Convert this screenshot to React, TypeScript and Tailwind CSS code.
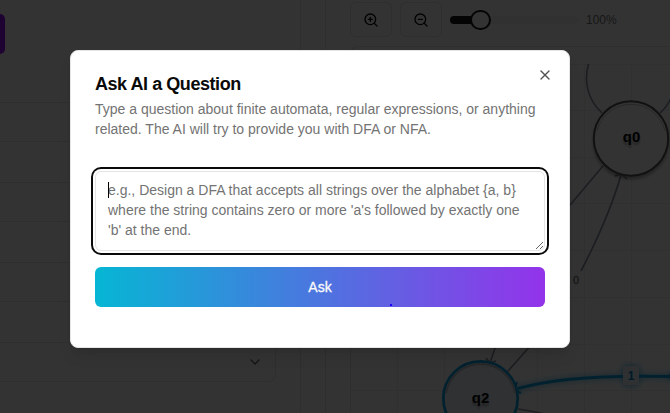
import { ChevronDown, X, ZoomIn, ZoomOut } from "lucide-react";

const verticals = [397.5, 444.5, 490.5, 537.5, 584.5, 631.5];
const horizontals = [64.5, 110.5, 157.5, 203.5, 250.5, 297.5, 344.5, 390.5];

function Sidebar() {
  return (
    <aside className="h-full w-[301px] shrink-0 border-r border-[#e5e5e5]">
      <div className="mt-[14px] h-10 w-[5px] rounded-r-md bg-purple-600" />
      <div className="mt-[48px] w-[276px]">
        {["h-[39px]", "h-[41px]", "h-[39px]", "h-[41px]", "h-[39px]", "h-[41px]"].map((h, i) => (
          <div key={i} className={`${h} border-t border-[#e5e5e5]`} />
        ))}
        <div className="flex h-[40px] items-center justify-end rounded-br-lg border-t border-r border-b border-[#e5e5e5] pr-3">
          <ChevronDown className="h-4 w-4 text-[#666666]" />
        </div>
      </div>
    </aside>
  );
}

function Toolbar() {
  return (
    <div className="flex h-[35px] items-center">
      <button className="flex h-[35px] w-[42px] items-center justify-center rounded-md border border-[#e5e5e5]">
        <ZoomIn className="h-4 w-4" />
      </button>
      <button className="ml-2 flex h-[35px] w-[42px] items-center justify-center rounded-md border border-[#e5e5e5]">
        <ZoomOut className="h-4 w-4" />
      </button>
      <div className="ml-2 flex h-5 w-32 items-center">
        <div className="h-2 w-[21px] rounded-l-full bg-[#171717]" />
        <div className="-ml-px h-5 w-[21px] rounded-full border-2 border-[#171717] bg-white" />
        <div className="h-2 flex-1 rounded-r-full bg-[#f5f5f5]" />
      </div>
      <span className="ml-2 text-xs text-[#737373]">100%</span>
    </div>
  );
}

function Diagram() {
  return (
    <svg className="h-[349px] w-[319px]" viewBox="351 64 319 349">
      <defs>
        <filter id="glow" x="-20%" y="-200%" width="140%" height="500%">
          <feDropShadow dx="0" dy="0" stdDeviation="3" floodColor="#0ea5e9" floodOpacity="0.8" />
        </filter>
        <filter id="shade" x="-30%" y="-30%" width="160%" height="160%">
          <feDropShadow dx="0" dy="3" stdDeviation="1.5" floodColor="#000" floodOpacity="0.3" />
        </filter>
      </defs>
      <g stroke="#eeeeee" strokeWidth="1">
        {verticals.map((x) => <path key={x} d={`M${x} 64V413`} />)}
        {horizontals.map((y) => <path key={y} d={`M351 ${y}H670`} />)}
      </g>
      <g fill="none" stroke="#8d93a5" strokeWidth="1.7">
        <path d="M589 62C583 82 588 100 602 113" />
        <path d="M660 113Q667 107 671 98" />
        <path d="M603 166L565 211" />
        <path d="M621 175Q609 217 581 271" />
        <path d="M497 342L490 363M486 358L490 363L496 361" />
        <path d="M532 344L508 371" />
        <path d="M518 409Q532 411 545 414" />
      </g>
      <g filter="url(#glow)" fill="none" stroke="#0ea5e9" strokeWidth="3">
        <path d="M518 388.5Q568 374 670 376.5" />
        <path d="M517 382L514 390L521 393" strokeWidth="2" />
        <path d="M674 370L667 376.5L674 383Z" fill="#0ea5e9" stroke="none" />
        <rect x="623" y="366" width="16" height="19" fill="#e3edf5" stroke="none" />
      </g>
      <circle cx="631" cy="138.5" r="37.2" fill="#fff" stroke="#555" strokeWidth="2" filter="url(#shade)" />
      <circle cx="480.5" cy="398.5" r="37.2" fill="#f0f4fa" stroke="#0ea5e9" strokeWidth="2.8" />
      <path d="M446 393A35 35 0 0 1 515 393" fill="none" stroke="#bcc0c8" strokeWidth="2" />
      <path d="M597 131A35 35 0 0 1 665 131" fill="none" stroke="#c4c4c4" strokeWidth="1" />
      <path d="M615 176L621 174L627 179" fill="none" stroke="#666" strokeWidth="1.5" />
      <g fontFamily="Liberation Sans, Arial, sans-serif" fontWeight="700" textAnchor="middle">
        <g fontSize="15" fill="#0a0a0a" className="[text-shadow:0_3px_2px_rgba(0,0,0,0.3)]">
          <text x="631.5" y="142">q0</text>
          <text x="480.5" y="403">q2</text>
        </g>
        <text x="576" y="284" fontSize="11" fill="#777" fontWeight="400" stroke="#777" strokeWidth="0.3">0</text>
        <text x="631" y="379.5" fontSize="12" fill="#0284c7">1</text>
      </g>
    </svg>
  );
}

function AskDialog() {
  return (
    <section role="dialog" className="relative h-[298px] w-[500px] rounded-lg border border-[#e5e5e5] bg-white p-6 shadow-lg">
      <h2 className="text-lg leading-none font-semibold tracking-tight text-[#0a0a0a]">Ask AI a Question</h2>
      <p className="mt-1.5 text-sm text-[#737373]">
        Type a question about finite automata, regular expressions, or anything
        <br />
        related. The AI will try to provide you with DFA or NFA.
      </p>
      <div className="mt-4 flex flex-col gap-4 py-4">
        <div className="relative h-20">
          <textarea
            className="block h-20 w-full rounded-md border border-[#e5e5e5] bg-white px-3 py-2 text-sm ring-2 ring-[#0a0a0a] ring-offset-2 outline-none placeholder:text-[#737373]"
            placeholder="e.g., Design a DFA that accepts all strings over the alphabet {a, b} where the string contains zero or more 'a's followed by exactly one 'b' at the end."
          />
          <span className="absolute top-[11px] left-[13px] h-4 w-px bg-black" />
        </div>
        <button className="relative h-10 w-full rounded-md bg-[linear-gradient(to_right,#06b6d4,#9333ea)] text-sm font-medium text-[#fafafa] [-webkit-text-stroke:0.3px_#fafafa]">
          Ask
          <span className="absolute top-[37px] left-[295px] h-[2px] w-[2px] bg-[#2000ff]" />
        </button>
      </div>
      <button aria-label="Close" className="absolute top-4 right-4 opacity-70">
        <X className="h-4 w-4 text-[#0a0a0a]" />
      </button>
    </section>
  );
}

export default function App() {
  return (
    <main className="relative h-[413px] w-[670px] overflow-hidden bg-white font-['Liberation_Sans',Arial,sans-serif] text-[#0a0a0a]">
      <div className="flex h-full">
        <Sidebar />
        <div className="w-[24px] shrink-0" />
        <div className="h-full flex-1 border-l border-[#e5e5e5] pt-[2px] pl-6">
          <Toolbar />
          <div className="mt-[9px] h-[367px] w-[330px] rounded-tl-lg border-t border-l border-[#e5e5e5] pt-[17px]">
            <Diagram />
          </div>
        </div>
      </div>
      <div className="absolute inset-0 flex items-start bg-black/80 pt-[50px] pl-[70px]">
        <AskDialog />
      </div>
    </main>
  );
}
